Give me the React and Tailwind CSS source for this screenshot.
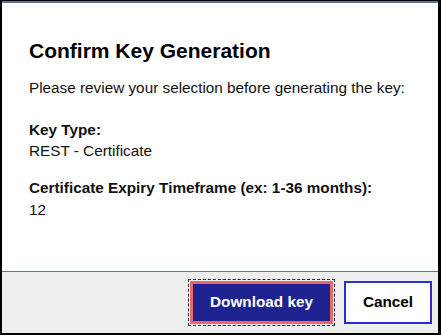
export default function App() {
  return (
    <div className="w-[441px] h-[335px] bg-black pl-[2px] pr-[3px] pb-[2px] pt-[1px] font-['Liberation_Sans',Arial,sans-serif] text-[#111]">
      <div className="flex flex-col h-full border-t-2 border-[#5d7792] bg-white">
        <div className="flex-1 pl-[27px] pt-[35px]">
          <h2 className="text-[21px] font-bold leading-[26px] text-black">Confirm Key Generation</h2>
          <p className="mt-[14px] text-[15.3px] leading-[20px]">Please review your selection before generating the key:</p>
          <div className="mt-[22px]">
            <div className="text-[15.3px] font-bold leading-[20px]">Key Type:</div>
            <div className="mt-[1px] text-[15.3px] leading-[20px]">REST - Certificate</div>
          </div>
          <div className="mt-[17px]">
            <div className="text-[15.3px] font-bold leading-[20px]">Certificate Expiry Timeframe (ex: 1-36 months):</div>
            <div className="mt-[2px] text-[15.3px] leading-[20px]">12</div>
          </div>
        </div>
        <div className="h-[62px] shrink-0 border-t border-[#5d7792] bg-[#eeeeee] flex items-center justify-end gap-[9px] pr-[6px]">
          <div className="p-px border border-dashed border-[#1b2a3f]">
            <button className="w-[143px] h-[43px] bg-[#1f2391] border-[3px] border-[#f26565] text-white text-[15.3px] font-bold">Download key</button>
          </div>
          <button className="w-[88px] h-[43px] bg-white border-2 border-[#2a30cc] text-black text-[15.3px] font-bold">Cancel</button>
        </div>
      </div>
    </div>
  );
}
